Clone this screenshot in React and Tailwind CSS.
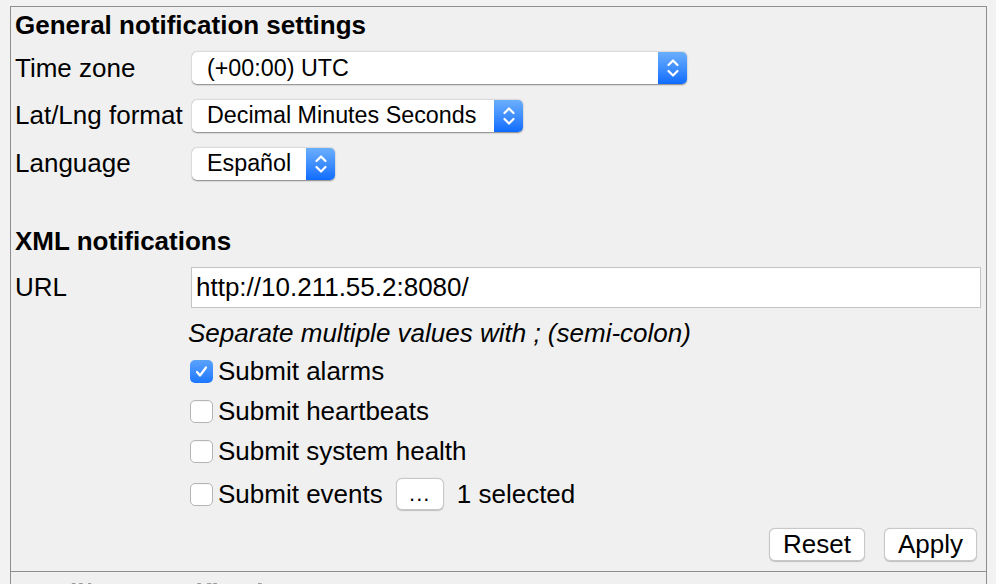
import React from "react";

const font = { fontFamily: '"Liberation Sans", Arial, Helvetica, sans-serif' };

function Arrows() {
  return (
    <svg width="14" height="22" viewBox="0 0 14 22" fill="none" stroke="white" strokeWidth="2.2" strokeLinecap="round" strokeLinejoin="round">
      <path d="M2.5 8 L7 3.5 L11.5 8" />
      <path d="M2.5 14 L7 18.5 L11.5 14" />
    </svg>
  );
}

function Select({ value, width }) {
  return (
    <div
      className="flex h-[32px] items-stretch rounded-[5px] bg-white shadow-[0_0.5px_1.5px_rgba(0,0,0,0.45)]"
      style={{ width }}
    >
      <div className="flex flex-1 items-center pl-[15px] text-[23.3px] text-black">{value}</div>
      <div className="flex w-[29px] items-center justify-center rounded-r-[5px] bg-gradient-to-b from-[#6aaefc] to-[#0b6cff]">
        <Arrows />
      </div>
    </div>
  );
}

function Check({ checked, label, children }) {
  return (
    <div className="flex items-center">
      {checked ? (
        <div className="flex h-[23px] w-[23px] items-center justify-center rounded-[5px] bg-gradient-to-b from-[#5aa2fc] to-[#1a76ff]">
          <svg width="15" height="15" viewBox="0 0 15 15" fill="none" stroke="white" strokeWidth="2.2" strokeLinecap="round" strokeLinejoin="round">
            <path d="M3 8 L6 11.5 L12 3.5" />
          </svg>
        </div>
      ) : (
        <div className="h-[23px] w-[23px] rounded-[5px] border border-[#b5b5b5] bg-white shadow-[inset_0_1px_0_rgba(0,0,0,0.04)]" />
      )}
      <span className="ml-[5px]">{label}</span>
      {children}
    </div>
  );
}

export default function App() {
  return (
    <div className="h-[584px] w-[996px] overflow-hidden bg-[#f2f2f2] pl-[10px] pt-[6px] text-[26px] text-black" style={font}>
      <div className="w-[977px] border-l border-r border-t border-[#8e8e8e] bg-[#f0f0f0]">
        <div className="pl-[4px] pr-[5px]">
          <h2 className="mt-[3px] h-[30px] leading-[30px] font-bold">General notification settings</h2>

          <div className="mt-[12px] flex flex-col gap-[15px]">
            <div className="flex h-[32px] items-center">
              <span className="w-[177px]">Time zone</span>
              <Select value="(+00:00) UTC" width={495} />
            </div>
            <div className="flex h-[33px] items-center">
              <span className="w-[177px]">Lat/Lng format</span>
              <Select value="Decimal Minutes Seconds" width={331} />
            </div>
            <div className="flex h-[33px] items-center">
              <span className="w-[177px]">Language</span>
              <Select value="Español" width={143} />
            </div>
          </div>

          <h2 className="mt-[46px] h-[30px] leading-[30px] font-bold">XML notifications</h2>

          <div className="mt-[11px] flex h-[41px] items-center">
            <span className="w-[176px]">URL</span>
            <div className="flex h-[41px] flex-1 items-center border border-[#c4c4c4] bg-white pl-[4px]">
              http://10.211.55.2:8080/
            </div>
          </div>

          <div className="ml-[173px] mt-[10px] h-[30px] leading-[30px] italic text-[26px]">
            Separate multiple values with ; (semi-colon)
          </div>

          <div className="ml-[175px] mt-[3px] flex flex-col">
            <div className="flex h-[40px] items-center">
              <Check checked label="Submit alarms" />
            </div>
            <div className="flex h-[40px] items-center">
              <Check label="Submit heartbeats" />
            </div>
            <div className="flex h-[40px] items-center">
              <Check label="Submit system health" />
            </div>
            <div className="flex h-[46px] items-center">
              <Check label="Submit events">
                <button className="ml-[13px] flex h-[32px] w-[48px] items-center justify-center rounded-[6px] border border-[#c8c8c8] bg-white pb-[2px] text-[22px] tracking-[1px] shadow-[0_0.5px_1px_rgba(0,0,0,0.2)]">
                  ...
                </button>
                <span className="ml-[13px]">1 selected</span>
              </Check>
            </div>
          </div>

          <div className="mt-[11px] flex justify-end gap-[19px] pr-[4px]">
            <button className="flex h-[33px] w-[96px] items-center justify-center rounded-[6px] border border-[#c8c8c8] bg-white shadow-[0_0.5px_1px_rgba(0,0,0,0.2)]">
              Reset
            </button>
            <button className="flex h-[33px] w-[93px] items-center justify-center rounded-[6px] border border-[#c8c8c8] bg-white shadow-[0_0.5px_1px_rgba(0,0,0,0.2)]">
              Apply
            </button>
          </div>
        </div>

        <div className="mt-[10px] border-t border-[#8e8e8e] pl-[4px]">
          <h2 className="mt-[6px] h-[30px] leading-[30px] font-bold text-[#9a9a9a] blur-[0.6px]">Email/SMS notifications</h2>
        </div>
      </div>
    </div>
  );
}
